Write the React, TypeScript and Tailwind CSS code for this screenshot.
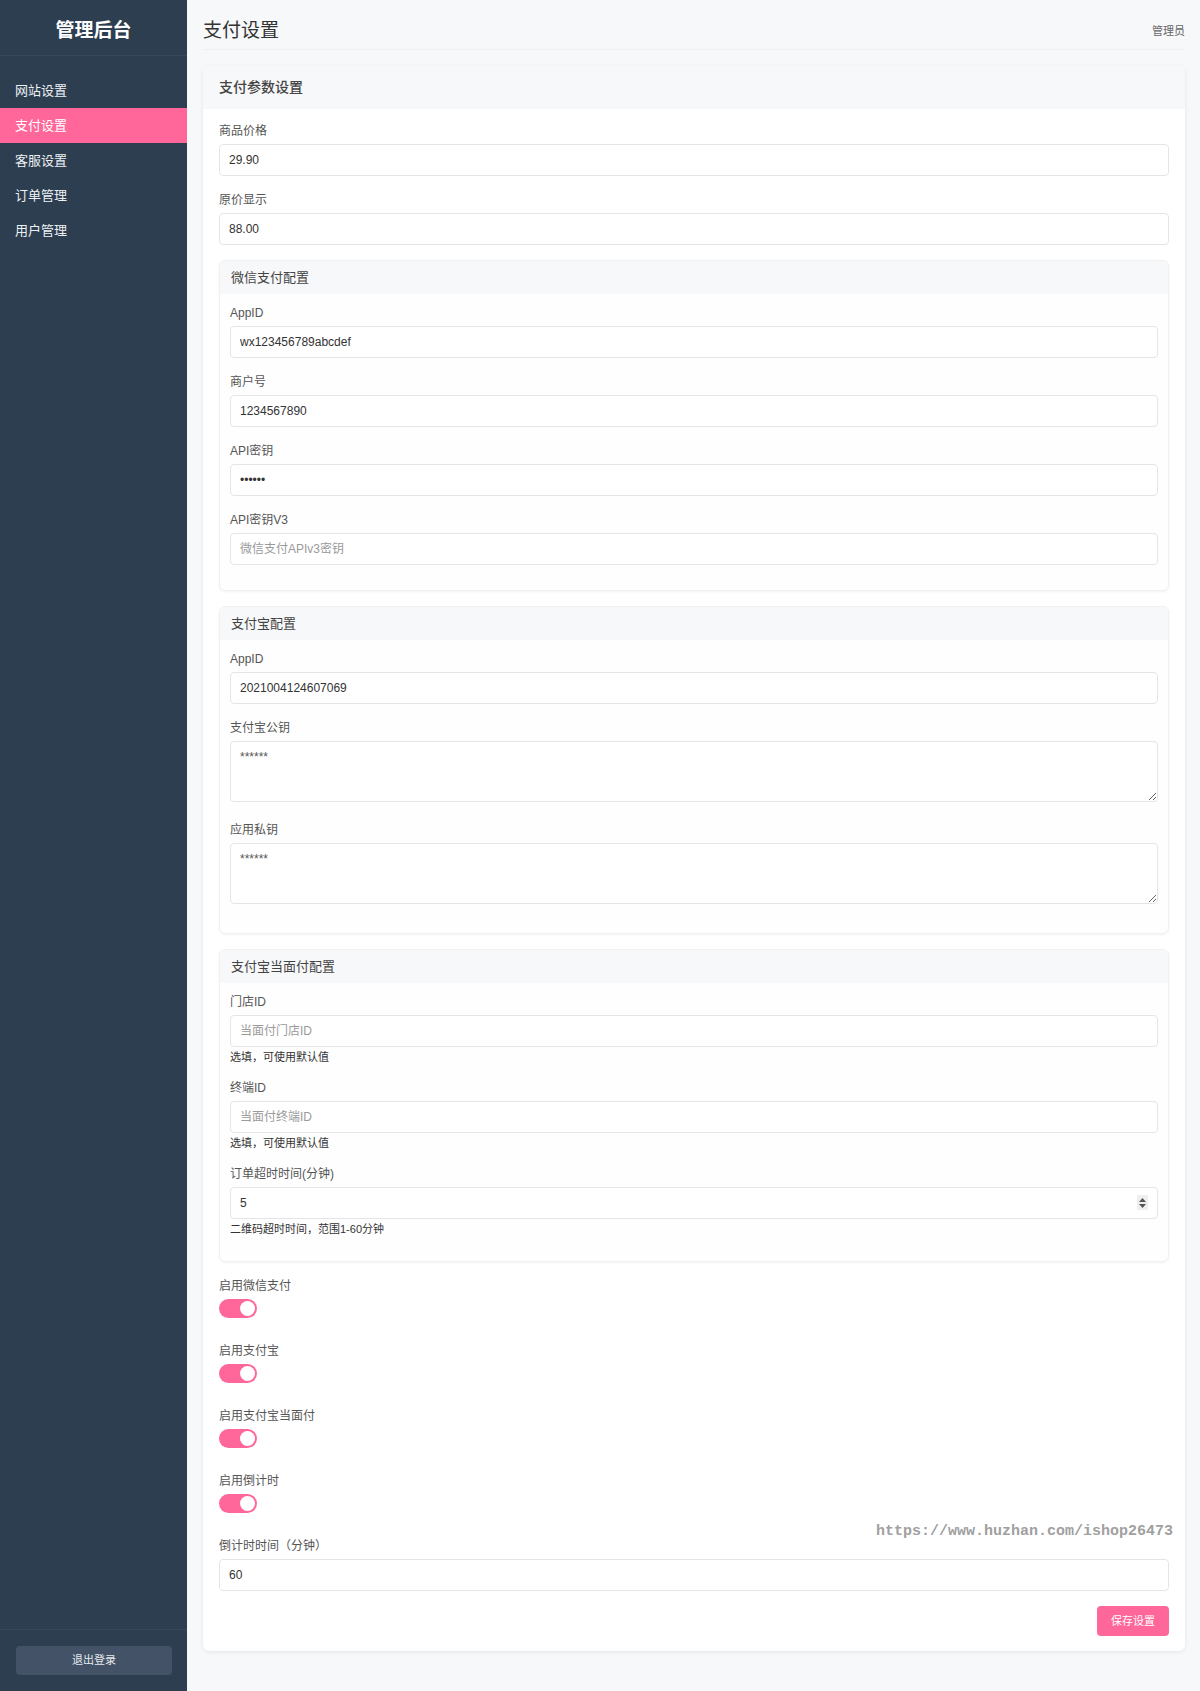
import React from "react";

const FONT = { fontFamily: '"Liberation Sans", "Noto Sans CJK SC", sans-serif' };

const navItems = ["网站设置", "支付设置", "客服设置", "订单管理", "用户管理"];

// Single form field: label + input
function Field({
  label,
  value,
  placeholder,
  help,
  spinner,
}: {
  label: string;
  value?: string;
  placeholder?: string;
  help?: string;
  spinner?: boolean;
}) {
  return (
    <div className="mb-[15px]">
      <label className="block mb-[4px] text-[12px] leading-[18px] text-[#555]">{label}</label>
      <div className="relative">
        <input
          type="text"
          readOnly
          defaultValue={value}
          placeholder={placeholder}
          className="block w-full h-[32px] px-[9px] bg-white border border-[#e3e5e8] rounded-[4px] text-[12px] text-[#333] placeholder-[#9a9a9a] outline-none"
        />
        {spinner && (
          <div className="absolute right-[10px] top-[8px] w-[11px] h-[15px] bg-[#efefef] flex flex-col items-center justify-center gap-[2px]">
            <svg width="7" height="4" viewBox="0 0 7 4">
              <path d="M3.5 0L7 4H0z" fill="#555" />
            </svg>
            <svg width="7" height="4" viewBox="0 0 7 4">
              <path d="M0 0h7L3.5 4z" fill="#555" />
            </svg>
          </div>
        )}
      </div>
      {help && <p className="mt-[3px] text-[11px] leading-[14px] text-[#333]">{help}</p>}
    </div>
  );
}

function AreaField({ label, value }: { label: string; value: string }) {
  return (
    <div className="mb-[19px]">
      <label className="block mb-[4px] text-[12px] leading-[18px] text-[#555]">{label}</label>
      <textarea
        readOnly
        defaultValue={value}
        className="block w-full h-[61px] px-[9px] py-[6px] bg-white border border-[#e3e5e8] rounded-[4px] text-[12px] text-[#555] outline-none"
      />
    </div>
  );
}

// Nested section card
function SubCard({ title, children }: { title: string; children: React.ReactNode }) {
  return (
    <div className="mb-[15px] border border-[#f0f1f3] rounded-[6px] bg-[#fefefe] shadow-[0_1px_3px_rgba(0,0,0,0.05)] overflow-hidden">
      <div className="h-[33px] px-[11px] flex items-center bg-[#f7f8fa] text-[13px] text-[#444]">{title}</div>
      <div className="px-[10px] pt-[10px] pb-[10px]">{children}</div>
    </div>
  );
}

function Toggle({ label }: { label: string }) {
  return (
    <div className="mb-[15px]">
      <label className="block mb-[4px] text-[12px] leading-[18px] text-[#555]">{label}</label>
      <div className="h-[28px]">
        <div className="relative w-[38px] h-[19px] rounded-full bg-[#ff6699]">
          <div className="absolute right-[2px] top-[2px] w-[15px] h-[15px] rounded-full bg-white" />
        </div>
      </div>
    </div>
  );
}

export default function App() {
  return (
    <div className="flex min-h-screen bg-[#f7f8fa]" style={FONT}>
      {/* Sidebar */}
      <aside className="w-[187px] shrink-0 bg-[#2c3e50] flex flex-col">
        <div className="h-[56px] pt-[8px] flex items-center justify-center border-b border-white/5">
          <h1 className="text-[19px] font-bold text-white">管理后台</h1>
        </div>
        <nav className="flex-1 pt-[17px]">
          {navItems.map((item) => (
            <div
              key={item}
              className={`h-[35px] px-[15px] flex items-center text-[13px] ${
                item === "支付设置" ? "bg-[#ff6699] text-white" : "text-[#eef1f4]"
              }`}
            >
              {item}
            </div>
          ))}
        </nav>
        <div className="border-t border-white/5 px-[16px] pt-[16px] pb-[16px]">
          <button className="w-[156px] h-[29px] rounded-[4px] bg-[#435266] text-[11px] text-[#e6eaee]">退出登录</button>
        </div>
      </aside>

      {/* Main */}
      <main className="flex-1 pl-[16px] pr-[15px] pb-[40px]">
        <header className="flex items-center justify-between pt-[17px] pb-[4px] border-b border-[#eef0f2]">
          <h2 className="text-[19px] leading-[28px] text-[#333]">支付设置</h2>
          <span className="text-[11px] text-[#666]">管理员</span>
        </header>

        <div className="relative mt-[16px] bg-white rounded-[6px] shadow-[0_1px_4px_rgba(0,0,0,0.08)] overflow-hidden">
          <div className="h-[43px] px-4 flex items-center bg-[#f7f8fa] text-[14px] font-medium text-[#444]">支付参数设置</div>
          <div className="px-4 pt-[13px] pb-[15px]">
            <Field label="商品价格" value="29.90" />
            <Field label="原价显示" value="88.00" />

            <SubCard title="微信支付配置">
              <Field label="AppID" value="wx123456789abcdef" />
              <Field label="商户号" value="1234567890" />
              <Field label="API密钥" value="••••••" />
              <Field label="API密钥V3" placeholder="微信支付APIv3密钥" />
            </SubCard>

            <SubCard title="支付宝配置">
              <Field label="AppID" value="2021004124607069" />
              <AreaField label="支付宝公钥" value="******" />
              <AreaField label="应用私钥" value="******" />
            </SubCard>

            <SubCard title="支付宝当面付配置">
              <Field label="门店ID" placeholder="当面付门店ID" help="选填，可使用默认值" />
              <Field label="终端ID" placeholder="当面付终端ID" help="选填，可使用默认值" />
              <Field label="订单超时时间(分钟)" value="5" help="二维码超时时间，范围1-60分钟" spinner />
            </SubCard>

            <Toggle label="启用微信支付" />
            <Toggle label="启用支付宝" />
            <Toggle label="启用支付宝当面付" />
            <Toggle label="启用倒计时" />

            <Field label="倒计时时间（分钟）" value="60" />

            <div className="flex justify-end">
              <button className="w-[72px] h-[30px] rounded-[4px] bg-[#ff6699] text-[11px] text-white">保存设置</button>
            </div>
          </div>

          {/* watermark */}
          <div
            className="absolute right-[12px] bottom-[110px] text-[15px] leading-[18px] font-bold text-[#a0a0a0] pointer-events-none"
            style={{ fontFamily: '"Liberation Mono", monospace' }}
          >
            https://www.huzhan.com/ishop26473
          </div>
        </div>
      </main>
    </div>
  );
}
